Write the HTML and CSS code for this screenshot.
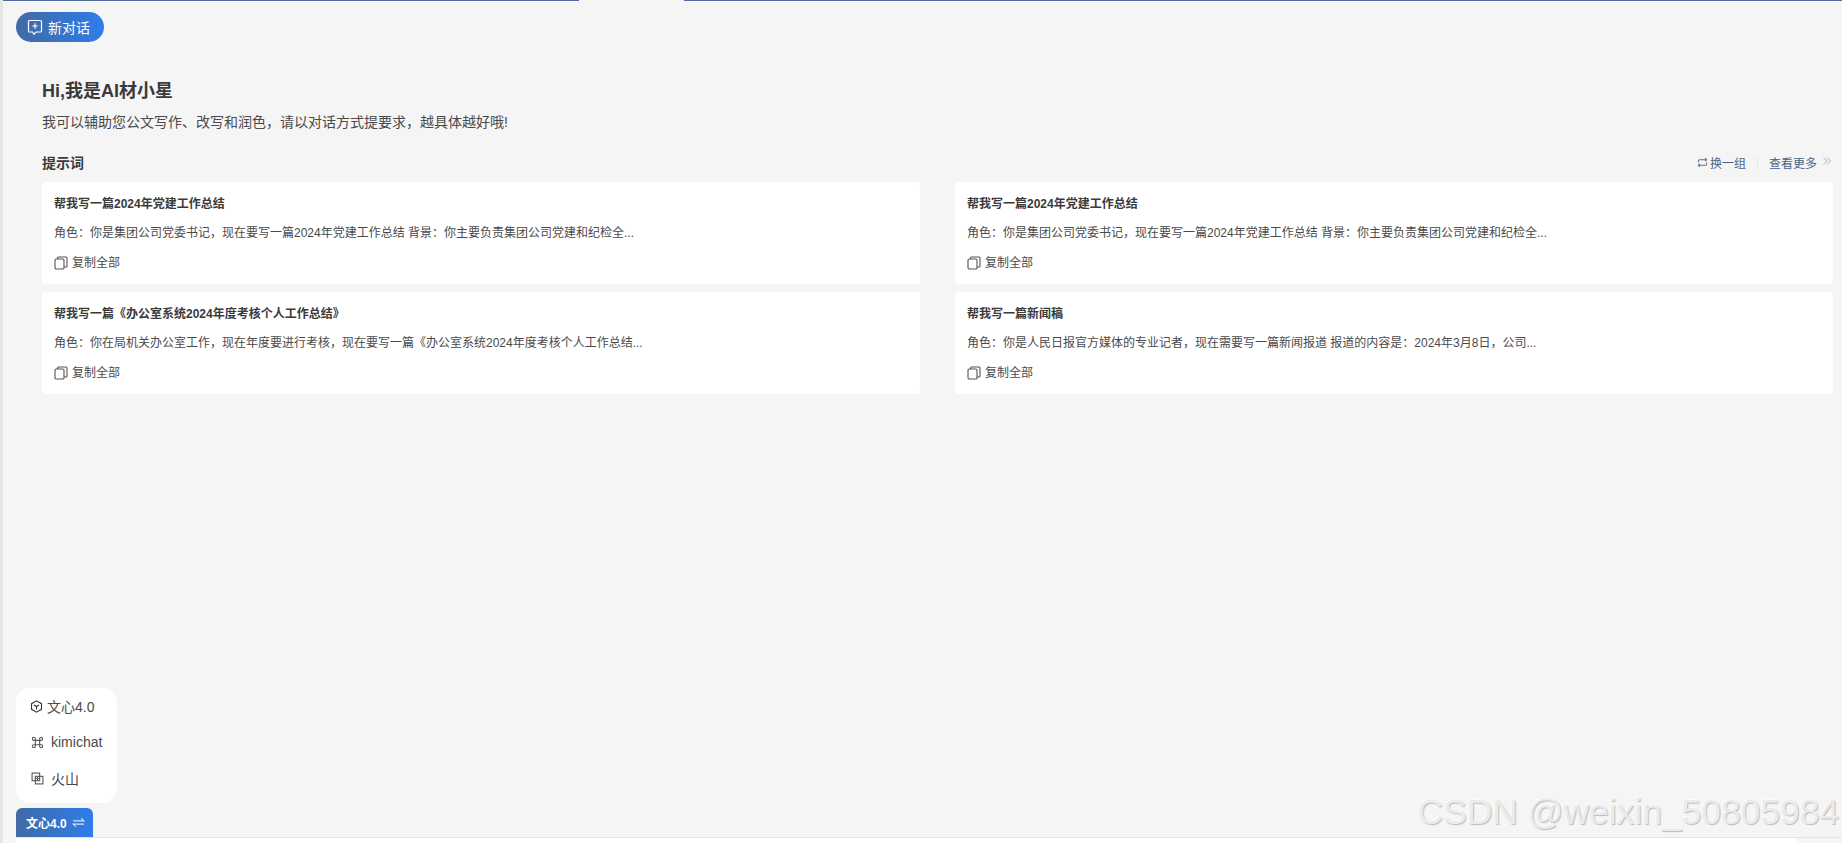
FILE: index.html
```html
<!DOCTYPE html>
<html lang="zh">
<head>
<meta charset="utf-8">
<title>AI材小星</title>
<link rel="stylesheet" href="styles.css">
</head>
<body>
<div class="shell">
  <div class="topline"><span class="seg seg-a"></span><span class="seg seg-b"></span></div>
  <header class="toolbar">
    <button class="new-chat">
      <svg class="ic16" viewBox="0 0 16 16" fill="none" stroke="#fff" stroke-width="1.2"><path d="M2.500 1.500h11a1 1 0 0 1 1 1v9.500a1 1 0 0 1-1 1H9.200L7 15.300 5.600 13H2.500a1 1 0 0 1-1-1V2.500a1 1 0 0 1 1-1z"/><path d="M8 4.300v5.400M5.300 7h5.400"/></svg>
      <span>新对话</span>
    </button>
  </header>
  <main class="main">
    <h1 class="hello">Hi,我是AI材小星</h1>
    <p class="intro">我可以辅助您公文写作、改写和润色，请以对话方式提要求，越具体越好哦!</p>
    <div class="prompt-head">
      <h2 class="prompt-title">提示词</h2>
      <div class="prompt-actions">
        <a class="action">
          <svg class="ic11" viewBox="0 0 12 12" fill="none" stroke="#5f7391" stroke-width="1.100"><path d="M1.500 6V4.500a1.500 1.500 0 0 1 1.500-1.500h7.500M8.800 1.200l1.800 1.800-1.800 1.800M10.500 6v1.500A1.500 1.500 0 0 1 9 9H1.500M3.200 7.200 1.400 9l1.800 1.800"/></svg>
          换一组
        </a>
        <span class="divider"></span>
        <a class="action">查看更多
          <svg class="ic10" viewBox="0 0 10 10" fill="none" stroke="#a9b4c6" stroke-width="1"><path d="M1.500 1.500 5 5 1.500 8.500M5 1.500 8.500 5 5 8.500"/></svg>
        </a>
      </div>
    </div>
    <section class="cards">
      <article class="card">
        <h3 class="card-title">帮我写一篇2024年党建工作总结</h3>
        <p class="card-desc">角色：你是集团公司党委书记，现在要写一篇2024年党建工作总结 背景：你主要负责集团公司党建和纪检全...</p>
        <div class="copy"><svg class="ic14" viewBox="0 0 14 14" fill="none" stroke="#555" stroke-width="1.100"><rect x="1" y="3" width="9" height="10" rx="1.300"/><path d="M3.500 3V2a1 1 0 0 1 1-1H12a1 1 0 0 1 1 1v8a1 1 0 0 1-1 1h-2"/></svg>复制全部</div>
      </article>
      <article class="card">
        <h3 class="card-title">帮我写一篇2024年党建工作总结</h3>
        <p class="card-desc">角色：你是集团公司党委书记，现在要写一篇2024年党建工作总结 背景：你主要负责集团公司党建和纪检全...</p>
        <div class="copy"><svg class="ic14" viewBox="0 0 14 14" fill="none" stroke="#555" stroke-width="1.100"><rect x="1" y="3" width="9" height="10" rx="1.300"/><path d="M3.500 3V2a1 1 0 0 1 1-1H12a1 1 0 0 1 1 1v8a1 1 0 0 1-1 1h-2"/></svg>复制全部</div>
      </article>
      <article class="card">
        <h3 class="card-title">帮我写一篇《办公室系统2024年度考核个人工作总结》</h3>
        <p class="card-desc">角色：你在局机关办公室工作，现在年度要进行考核，现在要写一篇《办公室系统2024年度考核个人工作总结...</p>
        <div class="copy"><svg class="ic14" viewBox="0 0 14 14" fill="none" stroke="#555" stroke-width="1.100"><rect x="1" y="3" width="9" height="10" rx="1.300"/><path d="M3.500 3V2a1 1 0 0 1 1-1H12a1 1 0 0 1 1 1v8a1 1 0 0 1-1 1h-2"/></svg>复制全部</div>
      </article>
      <article class="card">
        <h3 class="card-title">帮我写一篇新闻稿</h3>
        <p class="card-desc">角色：你是人民日报官方媒体的专业记者，现在需要写一篇新闻报道 报道的内容是：2024年3月8日，公司...</p>
        <div class="copy"><svg class="ic14" viewBox="0 0 14 14" fill="none" stroke="#555" stroke-width="1.100"><rect x="1" y="3" width="9" height="10" rx="1.300"/><path d="M3.500 3V2a1 1 0 0 1 1-1H12a1 1 0 0 1 1 1v8a1 1 0 0 1-1 1h-2"/></svg>复制全部</div>
      </article>
    </section>
  </main>
  <footer class="footer">
    <ul class="models">
      <li class="model model-first">
        <svg class="ic13" viewBox="0 0 12 12" fill="none" stroke="#333" stroke-width="1"><path d="M6 .8 10.600 3.400v5.200L6 11.200 1.400 8.600V3.400z"/><path d="M3.600 4.600 6 6l2.400-1.400M6 6v2.800"/></svg>
        文心4.0
      </li>
      <li class="model">
        <svg class="ic13" viewBox="0 0 12 12" fill="none" stroke="#555" stroke-width="1"><path d="M4 4h4v4H4zM4 4H2.600a1.400 1.400 0 1 1 1.400-1.400zM8 4V2.600A1.400 1.400 0 1 1 9.400 4zM8 8h1.400A1.400 1.400 0 1 1 8 9.400zM4 8v1.400A1.400 1.400 0 1 1 2.600 8z"/></svg>
        kimichat
      </li>
      <li class="model">
        <svg class="ic13" viewBox="0 0 12 12" fill="none" stroke="#555" stroke-width="1"><rect x="1" y="1" width="7" height="7"/><rect x="4" y="4" width="7" height="7"/><path d="M4 6h4M6 4v4" stroke-width=".8"/></svg>
        火山
      </li>
    </ul>
    <div class="tab">文心4.0
      <svg class="ic13" viewBox="0 0 12 12" fill="none" stroke="#d6e3f6" stroke-width="1"><path d="M1 4.500h10L8.300 2M11 7.500H1L3.700 10"/></svg>
    </div>
    <div class="inputbar"><div class="inputbox"></div></div>
  </footer>
  <div class="watermark">CSDN @weixin_50805984</div>
</div>
</body>
</html>
```

FILE: styles.css
```css
* { box-sizing: border-box; }
html, body { margin: 0; height: 100%; overflow: hidden; }
body {
  font-family: "Liberation Sans", "Noto Sans CJK SC", sans-serif;
  color: #3a3a3a;
  background: #f5f5f5;
}
h1, h2, h3, p, ul { margin: 0; padding: 0; }
svg { display: block; flex: none; }
.ic16 { width: 16px; height: 16px; }
.ic14 { width: 14px; height: 14px; }
.ic13 { width: 13px; height: 13px; }
.ic11 { width: 11px; height: 11px; }
.ic10 { width: 10px; height: 10px; }

.shell {
  position: relative;
  height: 843px;
  display: flex;
  flex-direction: column;
  border-left: 3px solid #e6e6e6;
}
.topline { display: flex; height: 2px; flex: none; }
.seg { height: 1px; background: #4c6a9c; display: block; }
.seg-a { width: 576px; }
.seg-b { margin-left: 105px; flex: 1; }

.toolbar { flex: none; padding: 10px 0 0 13px; }
.new-chat {
  display: flex;
  align-items: center;
  gap: 5px;
  width: 88px;
  height: 30px;
  padding: 0 0 0 11px;
  border: 0;
  border-radius: 15px;
  background: linear-gradient(90deg, #416aa6, #2e7de9);
  color: #fff;
  font: 14px "Liberation Sans", "Noto Sans CJK SC", sans-serif;
}

.main { flex: 1; padding: 38px 9px 0 39px; min-height: 0; }
.hello { font-size: 18px; line-height: 22px; font-weight: 700; color: #3a3a3a; }
.intro { margin-top: 10px; font-size: 14px; line-height: 20px; color: #4a4a4a; }
.prompt-head {
  display: flex;
  justify-content: space-between;
  align-items: center;
  margin-top: 20px;
  height: 22px;
}
.prompt-title { font-size: 14px; line-height: 20px; font-weight: 700; color: #3a3a3a; }
.prompt-actions { display: flex; align-items: center; gap: 11px; padding: 0 1px 1px 0; }
.action { display: flex; align-items: center; gap: 2px; font-size: 12px; color: #4a6387; }
.action .ic10 { margin: -3px 0 0 3px; }
.divider { width: 1px; height: 12px; background: #e6e6e6; }

.cards {
  display: grid;
  grid-template-columns: 1fr 1fr;
  column-gap: 35px;
  row-gap: 8px;
  margin-top: 8px;
}
.card {
  height: 102px;
  padding: 13px 12px 0;
  background: #fff;
  border-radius: 4px;
}
.card-title { font-size: 12px; line-height: 18px; font-weight: 700; color: #3a3a3a; }
.card-desc { margin-top: 11px; font-size: 12px; line-height: 18px; color: #4a4a4a; }
.copy {
  display: flex;
  align-items: center;
  gap: 4px;
  margin-top: 12px;
  font-size: 12px;
  line-height: 18px;
  color: #4a4a4a;
}

.footer { flex: none; padding-left: 13px; }
.models {
  width: 101px;
  height: 115px;
  padding: 0 0 0 14px;
  list-style: none;
  background: #fff;
  border-radius: 14px;
}
.model {
  display: flex;
  align-items: center;
  gap: 7px;
  height: 36px;
  font-size: 14px;
  color: #4a4a4a;
  padding-left: 1px;
}
.model-first { gap: 4px; padding-left: 0; }
.tab {
  display: flex;
  align-items: center;
  gap: 5px;
  width: 77px;
  height: 29px;
  margin-top: 5px;
  padding-left: 10px;
  border-radius: 6px 6px 0 0;
  background: linear-gradient(90deg, #416aa6, #2e7de9);
  color: #fff;
  font-size: 12px;
  font-weight: 700;
}
.inputbar { height: 6px; border-top: 1px solid #e4e4e4; }
.inputbox { height: 5px; width: 1780px; background: #fff; }

.watermark {
  position: absolute;
  right: 3px;
  bottom: 9px;
  font-size: 35.400px;
  line-height: 44px;
  white-space: nowrap;
  color: #ebebeb;
  text-shadow: 1px 1px 1px #bcbcbc, -1px -1px 0 #fbfbfb;
}
```
